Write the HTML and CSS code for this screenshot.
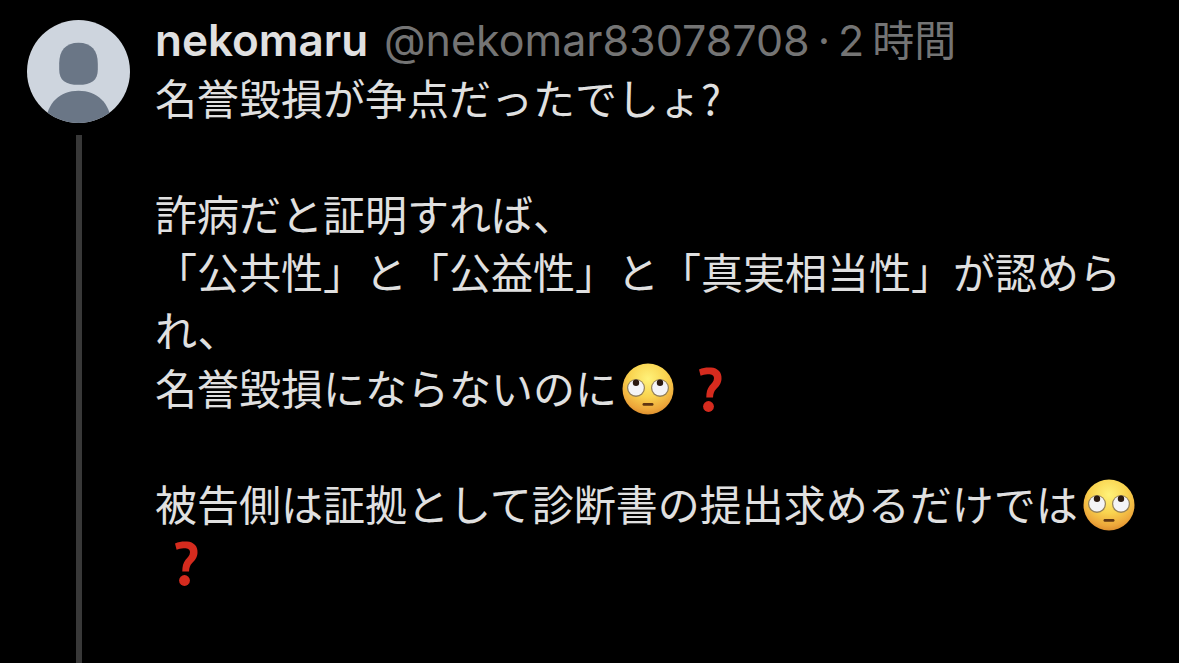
FILE: index.html
```html
<!DOCTYPE html>
<html lang="ja">
<head>
    <meta charset="UTF-8">
    <meta name="viewport" content="width=device-width, initial-scale=1.0">
    <title>nekomaru</title>
    <link rel="stylesheet" href="styles.css">
</head>
<body>

    <!-- Shared emoji shapes -->
    <svg class="sprite" aria-hidden="true">
        <defs>
            <radialGradient id="face-fill" cx="0.5" cy="0.3" r="0.72">
                <stop offset="0" stop-color="#fff27a" />
                <stop offset="0.5" stop-color="#f9d34f" />
                <stop offset="0.85" stop-color="#eda63a" />
                <stop offset="1" stop-color="#d98a2c" />
            </radialGradient>
            <symbol id="rolling-eyes" viewBox="0 0 52 52">
                <circle cx="26" cy="26" r="25.5" fill="url(#face-fill)" />
                <circle cx="14" cy="25" r="9" fill="#94815a" />
                <circle cx="38" cy="25" r="9" fill="#94815a" />
                <circle cx="14" cy="24.8" r="7.8" fill="#f4f4f6" />
                <circle cx="38" cy="24.8" r="7.8" fill="#f4f4f6" />
                <circle cx="14" cy="19.8" r="3.2" fill="#2b1a10" />
                <circle cx="38" cy="19.8" r="3.2" fill="#2b1a10" />
                <rect x="20.5" y="40" width="11" height="2.8" rx="1.4" fill="#5f3512" />
            </symbol>
            <symbol id="question" viewBox="0 0 24 46">
                <path d="M1 2.5C5 0.7 9 0.3 13 0.6C20 1.1 24 5.6 23.500 12C23.200 17 20.5 19.8 18 22.2C16 24.2 15.3 26.5 15 30.5H8.3C8.3 25.5 9.2 21.8 11.6 18.8C13.8 16 15.9 14.4 16 11.2C16.1 8 13.5 7 9.5 7.2C7 7.3 4.5 8 2.6 8.8Z" fill="#d52b1e" />
                <circle cx="10.500" cy="39.5" r="5.4" fill="#d52b1e" />
            </symbol>
        </defs>
    </svg>

    <article class="tweet">
        <div class="tweet-side">
            <svg class="avatar" viewBox="0 0 104 104" role="img" aria-label="nekomaru">
                <defs>
                    <clipPath id="avatar-clip"><circle cx="52" cy="52" r="52" /></clipPath>
                </defs>
                <g clip-path="url(#avatar-clip)">
                    <rect width="104" height="104" fill="#ced5de" />
                    <path d="M52 23C65 23 71.5 31 71.5 44V50C71.5 61 65 65.5 52 65.5S32.500 61 32.500 50V44C32.500 31 39 23 52 23Z" fill="#6a7686" />
                    <path d="M19 104C20 84 33 71.500 52 71.500S84 84 85 104Z" fill="#6a7686" />
                </g>
            </svg>
            <div class="thread-line"></div>
        </div>

        <div class="tweet-main">
            <header class="tweet-header">
                <span class="name">nekomaru</span>
                <div class="meta">
                    <span>@nekomar83078708</span>
                    <span>·</span>
                    <time><span>2</span><span class="unit">時間</span></time>
                </div>
            </header>
            <div class="tweet-text">
                <p>名誉毀損が争点だったでしょ?</p>
                <p>詐病だと証明すれば、<br>「公共性」と「公益性」と「真実相当性」が認められ、<br>名誉毀損にならないのに<svg class="emoji" role="img" aria-label="🙄"><use href="#rolling-eyes" /></svg><svg class="emoji mark" role="img" aria-label="❓"><use href="#question" /></svg></p>
                <p>被告側は証拠として診断書の提出求めるだけでは<svg class="emoji" role="img" aria-label="🙄"><use href="#rolling-eyes" /></svg><svg class="emoji mark" role="img" aria-label="❓"><use href="#question" /></svg></p>
            </div>
        </div>
    </article>

</body>
</html>
```
FILE: styles.css
```css
body {
    margin: 0;
    background-color: #000;
    color: #e0e0e0;
    font-family: Inter, "Noto Sans CJK JP", sans-serif;
}
.sprite {
    position: absolute;
    width: 0;
    height: 0;
}
.tweet {
    display: flex;
    gap: 25px;
    min-height: 100vh;
    box-sizing: border-box;
    padding: 20px 20px 0 27px;
}
.tweet-side {
    display: flex;
    flex-direction: column;
    align-items: center;
    gap: 12px;
}
.avatar {
    display: block;
    width: 103px;
    height: 103px;
}
.thread-line {
    flex: 1;
    width: 6px;
    background-color: #383838;
}
.tweet-main {
    flex: 1;
    min-width: 0;
}
.tweet-header {
    display: flex;
    align-items: baseline;
    gap: 16px;
    height: 48px;
    font-size: 44px;
    line-height: 36px;
    white-space: nowrap;
}
.name {
    font-weight: 600;
}
.meta {
    display: flex;
    align-items: baseline;
    gap: 8px;
    color: #747474;
    font-size: 43px;
}
.meta time {
    display: flex;
    align-items: baseline;
    gap: 8px;
}
.unit {
    font-family: "Noto Sans CJK JP", sans-serif;
    font-size: 42px;
}
.tweet-text {
    font-family: "Noto Sans CJK JP", sans-serif;
    font-size: 42px;
    line-height: 58px;
}
.tweet-text p {
    margin: 0 0 58px;
}
.tweet-text p:last-child {
    margin-bottom: 0;
}
.emoji {
    width: 62px;
    height: 52px;
    vertical-align: -10px;
}
.mark {
    height: 46px;
    vertical-align: -8px;
}
```
